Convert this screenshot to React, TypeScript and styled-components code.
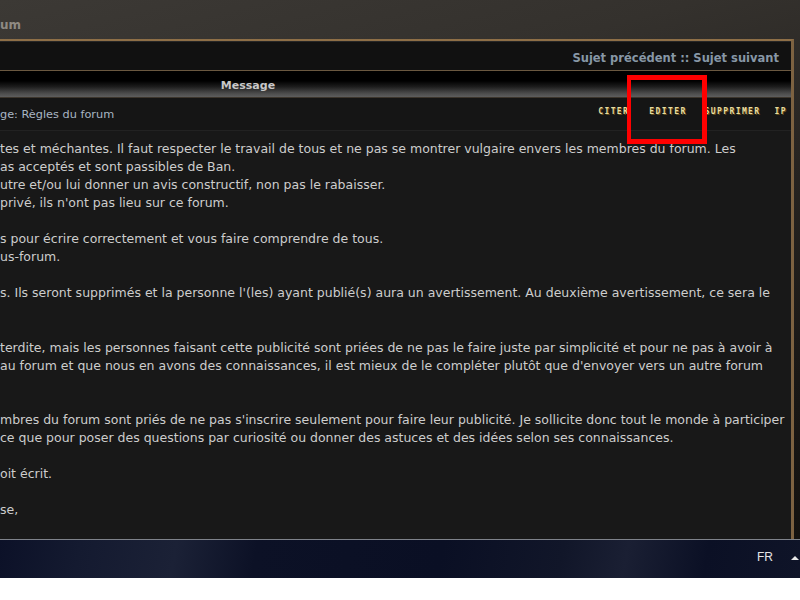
import React from "react";
import styled, { createGlobalStyle } from "styled-components";

const Global = createGlobalStyle`
  html, body { margin: 0; padding: 0; background: #ffffff; }
  body { font-family: "DejaVu Sans", Verdana, sans-serif; }
`;

const Screen = styled.div`
  position: relative;
  width: 800px;
  height: 600px;
  display: flex;
  flex-direction: column;
  overflow: hidden;
`;

const Browser = styled.div`
  height: 539px;
  display: flex;
  flex-direction: column;
  background: linear-gradient(165deg, #3c3935 0%, #34312d 25%, #272421 50%, #1b1917 75%, #141210 100%);
`;

const TopBand = styled.div`
  height: 39px;
  display: flex;
  align-items: center;
  padding-top: 10px;
  box-sizing: border-box;
`;

const SiteTitle = styled.span`
  font-family: "DejaVu Sans", sans-serif;
  font-weight: bold;
  font-size: 12px;
  color: #8f8a83;
`;

const Panel = styled.div`
  flex: 1;
  margin-right: 6px;
  border-top: 2px solid #8e6f47;
  border-right: 3px solid #7d6241;
  background: #181818;
  display: flex;
  flex-direction: column;
  min-height: 0;
`;

const NavRow = styled.div`
  height: 30px;
  box-sizing: border-box;
  border-top: 1px solid #262626;
  background: #111111;
  display: flex;
  align-items: center;
  justify-content: flex-end;
  padding-right: 12px;
  border-bottom: 1px solid #6a5840;
`;

const NavLink = styled.span`
  font-family: "DejaVu Sans", sans-serif;
  font-weight: bold;
  font-size: 11.5px;
  color: #8797a6;
  padding-top: 3px;
`;

const HeadBar = styled.div`
  height: 26px;
  background: linear-gradient(180deg, #000000 0%, #000000 38%, #1c1c1c 60%, #4a4a4a 85%, #5e5e5e 100%);
  border-bottom: 1px solid #3d362d;
  display: flex;
  align-items: center;
`;

const HeadCell = styled.div`
  width: 496px;
  text-align: center;
  font-family: "DejaVu Sans", sans-serif;
  font-weight: bold;
  font-size: 11px;
  color: #c8c8c8;
  padding-top: 3px;
`;

const PostRow = styled.div`
  height: 32px;
  background: #151515;
  border-bottom: 1px solid #222222;
  display: flex;
  align-items: center;
  justify-content: space-between;
  padding-right: 4px;
`;

const Subject = styled.span`
  font-family: "DejaVu Sans", sans-serif;
  font-size: 11.3px;
  color: #a9b6c4;
`;

const Actions = styled.div`
  display: flex;
  align-items: center;
  margin-top: -6px;
`;

const ActionBtn = styled.span<{ $gap: number }>`
  font-family: "DejaVu Sans Mono", monospace;
  font-weight: bold;
  font-size: 8px;
  letter-spacing: 1.4px;
  color: #eadc9f;
  text-shadow: 1px 1px 0 #5e4b1c;
  margin-left: ${(p) => p.$gap}px;
`;

const PostBody = styled.div`
  flex: 1;
  padding-top: 9px;
  overflow: hidden;
  background: #181818;
`;

const Line = styled.div<{ $shift?: number }>`
  height: 18.05px;
  line-height: 18px;
  white-space: nowrap;
  font-family: "DejaVu Sans", Verdana, sans-serif;
  font-size: 12.5px;
  color: #cdcdcd;
  margin-left: ${(p) => p.$shift ?? 0}px;
`;

const Taskbar = styled.div`
  height: 38px;
  border-top: 1px solid #7e828a;
  background: linear-gradient(100deg, #0c1128 0%, #141a30 10%, #1b2136 22%, #0c1126 32%, #0a0f24 55%, #111629 70%, #1a1f33 78%, #0b1025 88%, #0f1428 100%);
  display: flex;
  align-items: center;
  justify-content: flex-end;
`;

const Lang = styled.span`
  font-family: "Liberation Sans", Arial, sans-serif;
  font-size: 12px;
  color: #e6e6e6;
  margin-right: 18px;
  margin-top: -4px;
`;

const Arrow = styled.span`
  width: 0;
  height: 0;
  border-left: 4px solid transparent;
  border-right: 4px solid transparent;
  border-bottom: 4px solid #e8e8e8;
  margin-right: 1px;
  margin-top: -2px;
`;

const WhiteStrip = styled.div`
  height: 22px;
  background: #ffffff;
`;

const Highlight = styled.div`
  position: absolute;
  left: 627px;
  top: 75px;
  width: 80px;
  height: 69px;
  box-sizing: border-box;
  border: 5px solid #ff0000;
  border-left-width: 4px;
  pointer-events: none;
`;

const lines: { text: string; shift?: number }[] = [
  { text: "tes et méchantes. Il faut respecter le travail de tous et ne pas se montrer vulgaire envers les membres du forum. Les" },
  { text: "as acceptés et sont passibles de Ban." },
  { text: "utre et/ou lui donner un avis constructif, non pas le rabaisser." },
  { text: " privé, ils n'ont pas lieu sur ce forum." },
  { text: "" },
  { text: "s pour écrire correctement et vous faire comprendre de tous." },
  { text: "us-forum." },
  { text: "" },
  { text: "s. Ils seront supprimés et la personne l'(les) ayant publié(s) aura un avertissement. Au deuxième avertissement, ce sera le" },
  { text: "" },
  { text: "" },
  { text: "terdite, mais les personnes faisant cette publicité sont priées de ne pas le faire juste par simplicité et pour ne pas à avoir à" },
  { text: "au forum et que nous en avons des connaissances, il est mieux de le compléter plutôt que d'envoyer vers un autre forum" },
  { text: "" },
  { text: "" },
  { text: "mbres du forum sont priés de ne pas s'inscrire seulement pour faire leur publicité. Je sollicite donc tout le monde à participer" },
  { text: "ce que pour poser des questions par curiosité ou donner des astuces et des idées selon ses connaissances." },
  { text: "" },
  { text: "oit écrit." },
  { text: "" },
  { text: "se," },
];

export default function App() {
  return (
    <>
      <Global />
      <Screen>
        <Browser>
          <TopBand>
            <SiteTitle>um</SiteTitle>
          </TopBand>
          <Panel>
            <NavRow>
              <NavLink>Sujet précédent :: Sujet suivant</NavLink>
            </NavRow>
            <HeadBar>
              <HeadCell>Message</HeadCell>
            </HeadBar>
            <PostRow>
              <Subject>ge: Règles du forum</Subject>
              <Actions>
                <ActionBtn $gap={0}>CITER</ActionBtn>
                <ActionBtn $gap={20}>EDITER</ActionBtn>
                <ActionBtn $gap={18}>SUPPRIMER</ActionBtn>
                <ActionBtn $gap={14}>IP</ActionBtn>
              </Actions>
            </PostRow>
            <PostBody>
              {lines.map((l, i) => (
                <Line key={i} $shift={l.shift}>
                  {l.text || "\u00a0"}
                </Line>
              ))}
            </PostBody>
          </Panel>
        </Browser>
        <Taskbar>
          <Lang>FR</Lang>
          <Arrow />
        </Taskbar>
        <WhiteStrip />
        <Highlight />
      </Screen>
    </>
  );
}
